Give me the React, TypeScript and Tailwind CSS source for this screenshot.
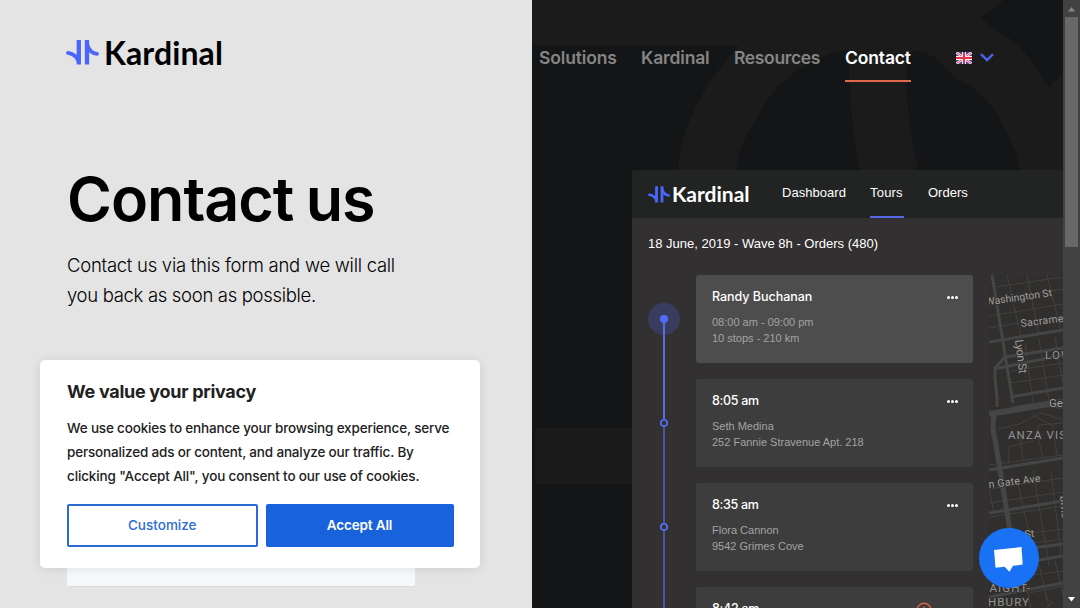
import { ReactNode } from "react";

function Mark({ className }: { className: string }) {
  return (
    <svg viewBox="0 0 33 25" className={className} fill="none" stroke="#4a66fa">
      <path d="M12.8 0V24.6M21 0V24.6" strokeWidth="4.3" />
      <path d="M2 12.8C7 13.6 11 16.2 12.6 21.5M21.2 4.5C22.8 10 26.5 13.4 31 13.9" strokeWidth="3.8" strokeLinecap="round" />
    </svg>
  );
}

function Backdrop() {
  return (
    <svg viewBox="0 0 531 608" className="absolute inset-0 h-[608px] w-[531px]">
      <rect width="531" height="608" fill="#131516" />
      <rect x="3" y="428" width="528" height="56" fill="#1a1a1a" />
      <path
        fill="#1b1b1b"
        d="M0 0H472L449 18C455 24 459 26 465 31C476 36 482 42 489 48C499 60 506 72 517 88L531 72V175H146C147 140 162 100 189 67L207 46H0Z"
      />
      <path fill="#131516" d="M375 64L376 53C381 51 386 51 392 52C402 56 412 64 423 78C432 82 443 88 451 97C460 105 466 115 472 127C482 145 486 156 488 175H387C380 142 373 105 375 64Z" />
      <path fill="#131516" d="M317 50C303 51 297 54 290 57C272 66 256 76 245 87C236 99 229 109 224 120C213 138 206 148 204 175H328C322 140 316 100 317 50Z" />
    </svg>
  );
}

function Flag() {
  return (
    <svg viewBox="0 0 16 12" className="h-3 w-4">
      <rect width="16" height="12" fill="#3b4a9c" />
      <path d="M0 0L16 12M16 0L0 12" stroke="#f0e4ee" strokeWidth="2.6" />
      <path d="M0 0L16 12M16 0L0 12" stroke="#e0405a" strokeWidth="0.9" />
      <path d="M8 0V12M0 6H16" stroke="#f8eef2" strokeWidth="4" />
      <path d="M8 0V12M0 6H16" stroke="#e8304a" strokeWidth="2" />
    </svg>
  );
}

function StreetMap() {
  return (
    <svg viewBox="0 0 74 333" className="h-[333px] w-[74px] shrink-0" fontFamily="Roboto, sans-serif" fill="none">
      <rect width="74" height="333" fill="#302f2d" />
      <g stroke="#42413e" strokeWidth="1">
        <path d="M6 12L74 2M0 26L74 14M0 41L74 29M0 53L74 41M20 82L74 74M22 96L74 88M22 108L74 100M22 132L74 124M0 190L74 180M0 214L74 203M0 228L74 217M0 242L74 231M10 262L74 254M14 272L74 264M30 302L74 296M40 318L74 311" />
        <path d="M18 0L32 62M38 0L50 60M58 0L72 56M36 68L44 128M50 64L60 126M66 62L74 108M28 205L46 284M44 196L60 290M62 196L72 280M0 214L5 238M12 198L20 250M50 290L60 332M66 286L74 320M34 296L42 333" />
        <path d="M9 154L30 149L52 138L74 145M20 189V172L44 166L50 150L74 148M30 156L34 186M48 160L54 182M64 152L68 180M44 140L66 152M56 322L64 328L58 333" />
      </g>
      <g stroke="#444545" strokeWidth="3">
        <path d="M3 0L24 128M0 67L74 55M5 94L16 82L74 73M5 94L74 80M6 93C5 105 9 120 8 132" />
        <path d="M21 122L74 113M0 195L74 183M0 238L74 226M28 275L74 269M44 286L74 281M0 322L74 308" />
        <path d="M7 136C3 145 3 154 6 164L22 262" strokeWidth="5" />
        <path d="M0 139L60 129L74 131" strokeWidth="6" />
      </g>
      <g fill="#a09f9d" fontSize="10.5" stroke="#302f2d" strokeWidth="1.5" paintOrder="stroke">
        <text x="-3" y="30" transform="rotate(-8 0 30)" textLength="67">Washington St</text>
        <text x="32" y="52" transform="rotate(-7 32 52)" textLength="59">Sacramento</text>
        <text x="26" y="65" fontSize="11.5" transform="rotate(83 26 65)" textLength="34">Lyon St</text>
        <text x="60" y="132" fontSize="11.5">Geary</text>
        <text x="-12" y="213" transform="rotate(-7 0 212)" textLength="64">den Gate Ave</text>
        <text x="71" y="221" transform="rotate(85 71 221)">Divis</text>
        <text x="36" y="263" transform="rotate(-7 36 263)">St</text>
      </g>
      <g fill="#949392" fontSize="11.5" stroke="#302f2d" strokeWidth="1.5" paintOrder="stroke" letterSpacing="1.1">
        <text x="56" y="84">LOWER</text>
        <text x="19" y="164">ANZA VISTA</text>
        <text x="-9" y="317">HAIGHT-</text>
        <text x="-1" y="331">HBURY</text>
      </g>
    </svg>
  );
}

function Dots() {
  return (
    <div className="flex gap-px pt-[4px]">
      <i className="size-[3px] rounded-full bg-white" />
      <i className="size-[3px] rounded-full bg-white" />
      <i className="size-[3px] rounded-full bg-white" />
    </div>
  );
}

function Card({ title, lines, active, alert }: { title: string; lines: string[]; active?: boolean; alert?: ReactNode }) {
  return (
    <div className={`flex h-[88px] w-[277px] shrink-0 justify-between rounded-[3px] pt-[12px] pr-[15px] pl-4 whitespace-nowrap ${active ? "bg-[#4d4d4d]" : "bg-[#3d3d3d]"}`}>
      <div>
        <div className={`font-[Inter,sans-serif] text-[12.5px] leading-[20px] font-medium text-white ${active ? "tracking-[-0.03px]" : "tracking-[-0.3px]"}`}>{title}</div>
        <div className="pt-[7px] text-[11px] leading-4 text-[#a3a3a3]">
          {lines.map((l) => <div key={l}>{l}</div>)}
        </div>
      </div>
      <div className="flex h-5 items-start gap-4 pt-[5px]">
        {alert}
        <Dots />
      </div>
    </div>
  );
}

function Timeline() {
  return (
    <svg viewBox="0 0 32 333" className="mr-4 h-[333px] w-8 shrink-0" fill="none">
      <circle cx="16" cy="44" r="16" fill="#383c5e" />
      <path d="M16 44V144" stroke="#5a6ce0" strokeWidth="2" />
      <path d="M16 152V248M16 256V333" stroke="#4854a4" strokeWidth="2" />
      <circle cx="16" cy="44" r="4" fill="#536bfa" />
      <circle cx="16" cy="148" r="3.2" stroke="#536bea" strokeWidth="1.8" />
      <circle cx="16" cy="252" r="3.2" stroke="#536bea" strokeWidth="1.8" />
    </svg>
  );
}

function TourPanel() {
  return (
    <div className="relative ml-[100px] flex h-[438px] flex-col overflow-hidden rounded-tl-[4px] bg-[#333031] font-['Liberation_Sans',sans-serif] text-[13px] whitespace-nowrap text-white">
      <div className="flex h-12 shrink-0 bg-[#222424] pl-4">
        <Mark className="mt-[16px] h-[17px] w-[22px]" />
        <span className="mt-[11px] ml-[2px] w-[110px] font-[Lato,sans-serif] text-[21px] leading-[26px] font-bold">Kardinal</span>
        <span className="mt-[13px] w-[88px] leading-5 tracking-[0.04px]">Dashboard</span>
        <span className="mr-6 flex h-12 w-[34px] flex-col justify-between border-b-2 border-[#5468e8] pt-[13px] leading-5 tracking-[0.2px]">Tours</span>
        <span className="mt-[13px] leading-5">Orders</span>
      </div>
      <div className="mt-4 h-5 shrink-0 pl-4 leading-5">18 June, 2019 - Wave 8h - Orders (480)</div>
      <div className="mt-[21px] flex h-[333px] pl-4">
        <Timeline />
        <div className="mr-4 flex h-[333px] flex-col gap-4 overflow-hidden">
          <Card active title="Randy Buchanan" lines={["08:00 am - 09:00 pm", "10 stops - 210 km"]} />
          <Card title="8:05 am" lines={["Seth Medina", "252 Fannie Stravenue Apt. 218"]} />
          <Card title="8:35 am" lines={["Flora Cannon", "9542 Grimes Cove"]} />
          <Card
            title="8:42 am"
            lines={[]}
            alert={
              <svg viewBox="0 0 16 16" className="-mt-[2px] -mr-[1px] size-4" fill="none" stroke="#d9614a" strokeWidth="1.5">
                <circle cx="8" cy="8" r="6.8" />
                <path d="M8 4.5V9M8 10.5V12" />
              </svg>
            }
          />
        </div>
        <StreetMap />
      </div>
    </div>
  );
}

function CookieBanner() {
  return (
    <div className="absolute top-[360px] left-[40px] h-[208px] w-[440px] rounded-[5px] bg-white pt-5 pl-[27px] whitespace-nowrap text-[#212121] shadow-[0_1px_10px_rgba(0,0,0,0.1)]">
      <h2 className="text-[18px] leading-6 font-bold tracking-[-0.29px]">We value your privacy</h2>
      <p className="mt-[12px] text-[13.5px] leading-6 font-medium tracking-[-0.17px]">
        We use cookies to enhance your browsing experience, serve
        <br />
        personalized ads or content, and analyze our traffic. By
        <br />
        <span className="tracking-[-0.14px]">clicking "Accept All", you consent to our use of cookies.</span>
      </p>
      <div className="mt-4 flex gap-2 text-[13.5px]">
        <button className="h-[43px] w-[190.5px] rounded-[2px] border-2 border-[#2b6bd2] font-medium text-[#2b6bd2]">Customize</button>
        <button className="h-[43px] w-[188px] rounded-[2px] bg-[#1863dc] font-semibold tracking-[-0.13px] text-white">Accept All</button>
      </div>
    </div>
  );
}

export default function App() {
  return (
    <div className="relative flex h-[608px] w-[1080px] overflow-hidden bg-[#e4e4e4] font-[Inter,sans-serif]">
      <section className="flex w-[532px] flex-col pl-[67px] whitespace-nowrap text-black">
        <div className="flex h-[68px] shrink-0 pt-[40px]">
          <Mark className="-ml-px h-[25px] w-[33px]" />
          <span className="-mt-[6px] ml-[5px] font-[Lato,sans-serif] text-[32px] leading-[38px] font-bold tracking-[0.1px]">Kardinal</span>
        </div>
        <h1 className="mt-[95px] text-[61px] leading-[72px] font-semibold tracking-[-1px] [word-spacing:-2px]">Contact us</h1>
        <p className="mt-[15px] text-[18.5px] leading-[30px] font-light tracking-[-0.27px]">
          Contact us via this form and we will call
          <br />
          <span className="tracking-[-0.32px]">you back as soon as possible.</span>
        </p>
        <div className="mt-[70px] h-[207px] w-[348px] shrink-0 rounded-[2px] border-b border-[#d8dcde] bg-[#f5f9fa]" />
      </section>
      <section className="relative w-[531px] overflow-hidden">
        <Backdrop />
        <nav className="relative flex h-[170px] pt-[46px] pl-[7px] text-[17.5px] leading-[23px] font-semibold tracking-[-0.15px] whitespace-nowrap text-[#858585]">
          <span className="w-[102px]">Solutions</span>
          <span className="w-[93px]">Kardinal</span>
          <span className="w-[111px] tracking-[-0.35px]">Resources</span>
          <span className="h-9 w-[66px] border-b-2 border-[#e2694c] text-white">Contact</span>
          <span className="mt-[6px] ml-[45px]"><Flag /></span>
          <svg viewBox="0 0 14 9" className="mt-[7px] ml-2 h-[9px] w-[14px]" fill="none" stroke="#4a62f0" strokeWidth="2.4">
            <path d="M1 1.2L7 7L13 1.2" />
          </svg>
        </nav>
        <TourPanel />
      </section>
      <div className="flex w-[17px] flex-col items-center justify-between bg-[#424242]">
        <svg viewBox="0 0 17 17" className="h-[17px] w-[17px] shrink-0"><path d="M5 11.5L8.5 7L12 11.5Z" fill="#868686" /></svg>
        <div className="h-[230px] w-[13px] bg-[#686868]" />
        <div className="grow" />
        <svg viewBox="0 0 17 17" className="h-[17px] w-[17px] shrink-0"><path d="M5 6L12 6L8.5 10.5Z" fill="#fff" /></svg>
      </div>
      <CookieBanner />
      <button className="absolute top-[528px] left-[979px] size-[60px] rounded-full bg-[#1972f5]">
        <svg viewBox="0 0 60 60" className="size-[60px]"><path d="M15 22L42.5 19L43.7 36.5L34 37.8L30.5 43.7L25.5 38.8L16.5 39.7Z" fill="#fff" /></svg>
      </button>
    </div>
  );
}
